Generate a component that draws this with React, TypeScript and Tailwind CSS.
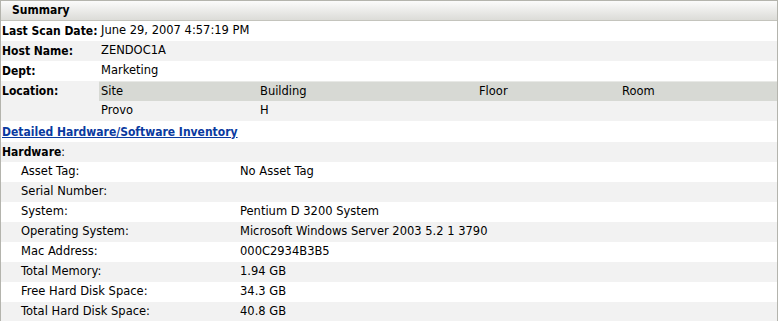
import React from "react";

const hw: [string, string][] = [
  ["Asset Tag:", "No Asset Tag"],
  ["Serial Number:", ""],
  ["System:", "Pentium D 3200 System"],
  ["Operating System:", "Microsoft Windows Server 2003 5.2 1 3790"],
  ["Mac Address:", "000C2934B3B5"],
  ["Total Memory:", "1.94 GB"],
  ["Free Hard Disk Space:", "34.3 GB"],
  ["Total Hard Disk Space:", "40.8 GB"],
];

const boldFont = { fontFamily: '"DejaVu Sans Condensed", "DejaVu Sans", sans-serif' };

export default function App() {
  return (
    <div
      className="w-[779px] h-[321px] overflow-hidden bg-white text-[11.5px] text-black"
      style={{ fontFamily: '"DejaVu Sans", Verdana, sans-serif' }}
    >
      <div className="w-[778px] border-l border-t border-r border-[#b4b4ad]">
        <div
          className="h-[20px] border-b border-[#c4c4bd] bg-gradient-to-b from-[#fbfbfb] to-[#dcdcd8] pl-[11px] font-bold text-[12px] leading-[18px] whitespace-nowrap"
          style={boldFont}
        >
          Summary
        </div>
        <div className="flex h-[20px] items-center bg-white">
          <div className="w-[98px] pl-[1px] font-bold text-[12px] whitespace-nowrap" style={boldFont}>Last Scan Date:</div>
          <div className="pl-[2px]">June 29, 2007 4:57:19 PM</div>
        </div>
        <div className="flex h-[20px] items-center bg-[#f2f2f2]">
          <div className="w-[98px] pl-[1px] font-bold text-[12px] whitespace-nowrap" style={boldFont}>Host Name:</div>
          <div className="pl-[2px]">ZENDOC1A</div>
        </div>
        <div className="flex h-[20px] items-center bg-white">
          <div className="w-[98px] pl-[1px] font-bold text-[12px] whitespace-nowrap" style={boldFont}>Dept:</div>
          <div className="pl-[2px]">Marketing</div>
        </div>
        <div className="flex h-[40px] bg-[#f2f2f2]">
          <div className="w-[98px] h-[20px] flex items-center pl-[1px] font-bold text-[12px] whitespace-nowrap" style={boldFont}>Location:</div>
          <div className="flex flex-col w-[678px]">
            <div className="flex h-[20px] items-center bg-[#d7d9d4] border-t border-[#e8e9e6]">
              <div className="w-[159px] pl-[2px]">Site</div>
              <div className="w-[219px] pl-[2px]">Building</div>
              <div className="w-[143px] pl-[2px]">Floor</div>
              <div className="flex-1 pl-[2px]">Room</div>
            </div>
            <div className="flex h-[20px] items-center">
              <div className="w-[159px] pl-[2px]">Provo</div>
              <div className="w-[219px] pl-[2px]">H</div>
              <div className="w-[143px] pl-[2px]"></div>
              <div className="flex-1 pl-[2px]"></div>
            </div>
          </div>
        </div>
        <div className="flex h-[21px] items-center bg-white pl-[1px]">
          <a href="#" className="font-bold text-[12px] text-[#0a3aa0] underline whitespace-nowrap" style={boldFont}>
            Detailed Hardware/Software Inventory
          </a>
        </div>
        <div className="flex h-[20px] items-center bg-[#f2f2f2] pl-[1px] text-[12px]" style={boldFont}>
          <span className="font-bold">Hardware</span>
          <span>:</span>
        </div>
        {hw.map(([k, v], i) => (
          <div
            key={k}
            className={`flex h-[20px] items-center ${i % 2 === 0 ? "bg-white" : "bg-[#f2f2f2]"}`}
          >
            <div className="w-[239px] pl-[20px] whitespace-nowrap">{k}</div>
            <div className="whitespace-nowrap">{v}</div>
          </div>
        ))}
      </div>
    </div>
  );
}
